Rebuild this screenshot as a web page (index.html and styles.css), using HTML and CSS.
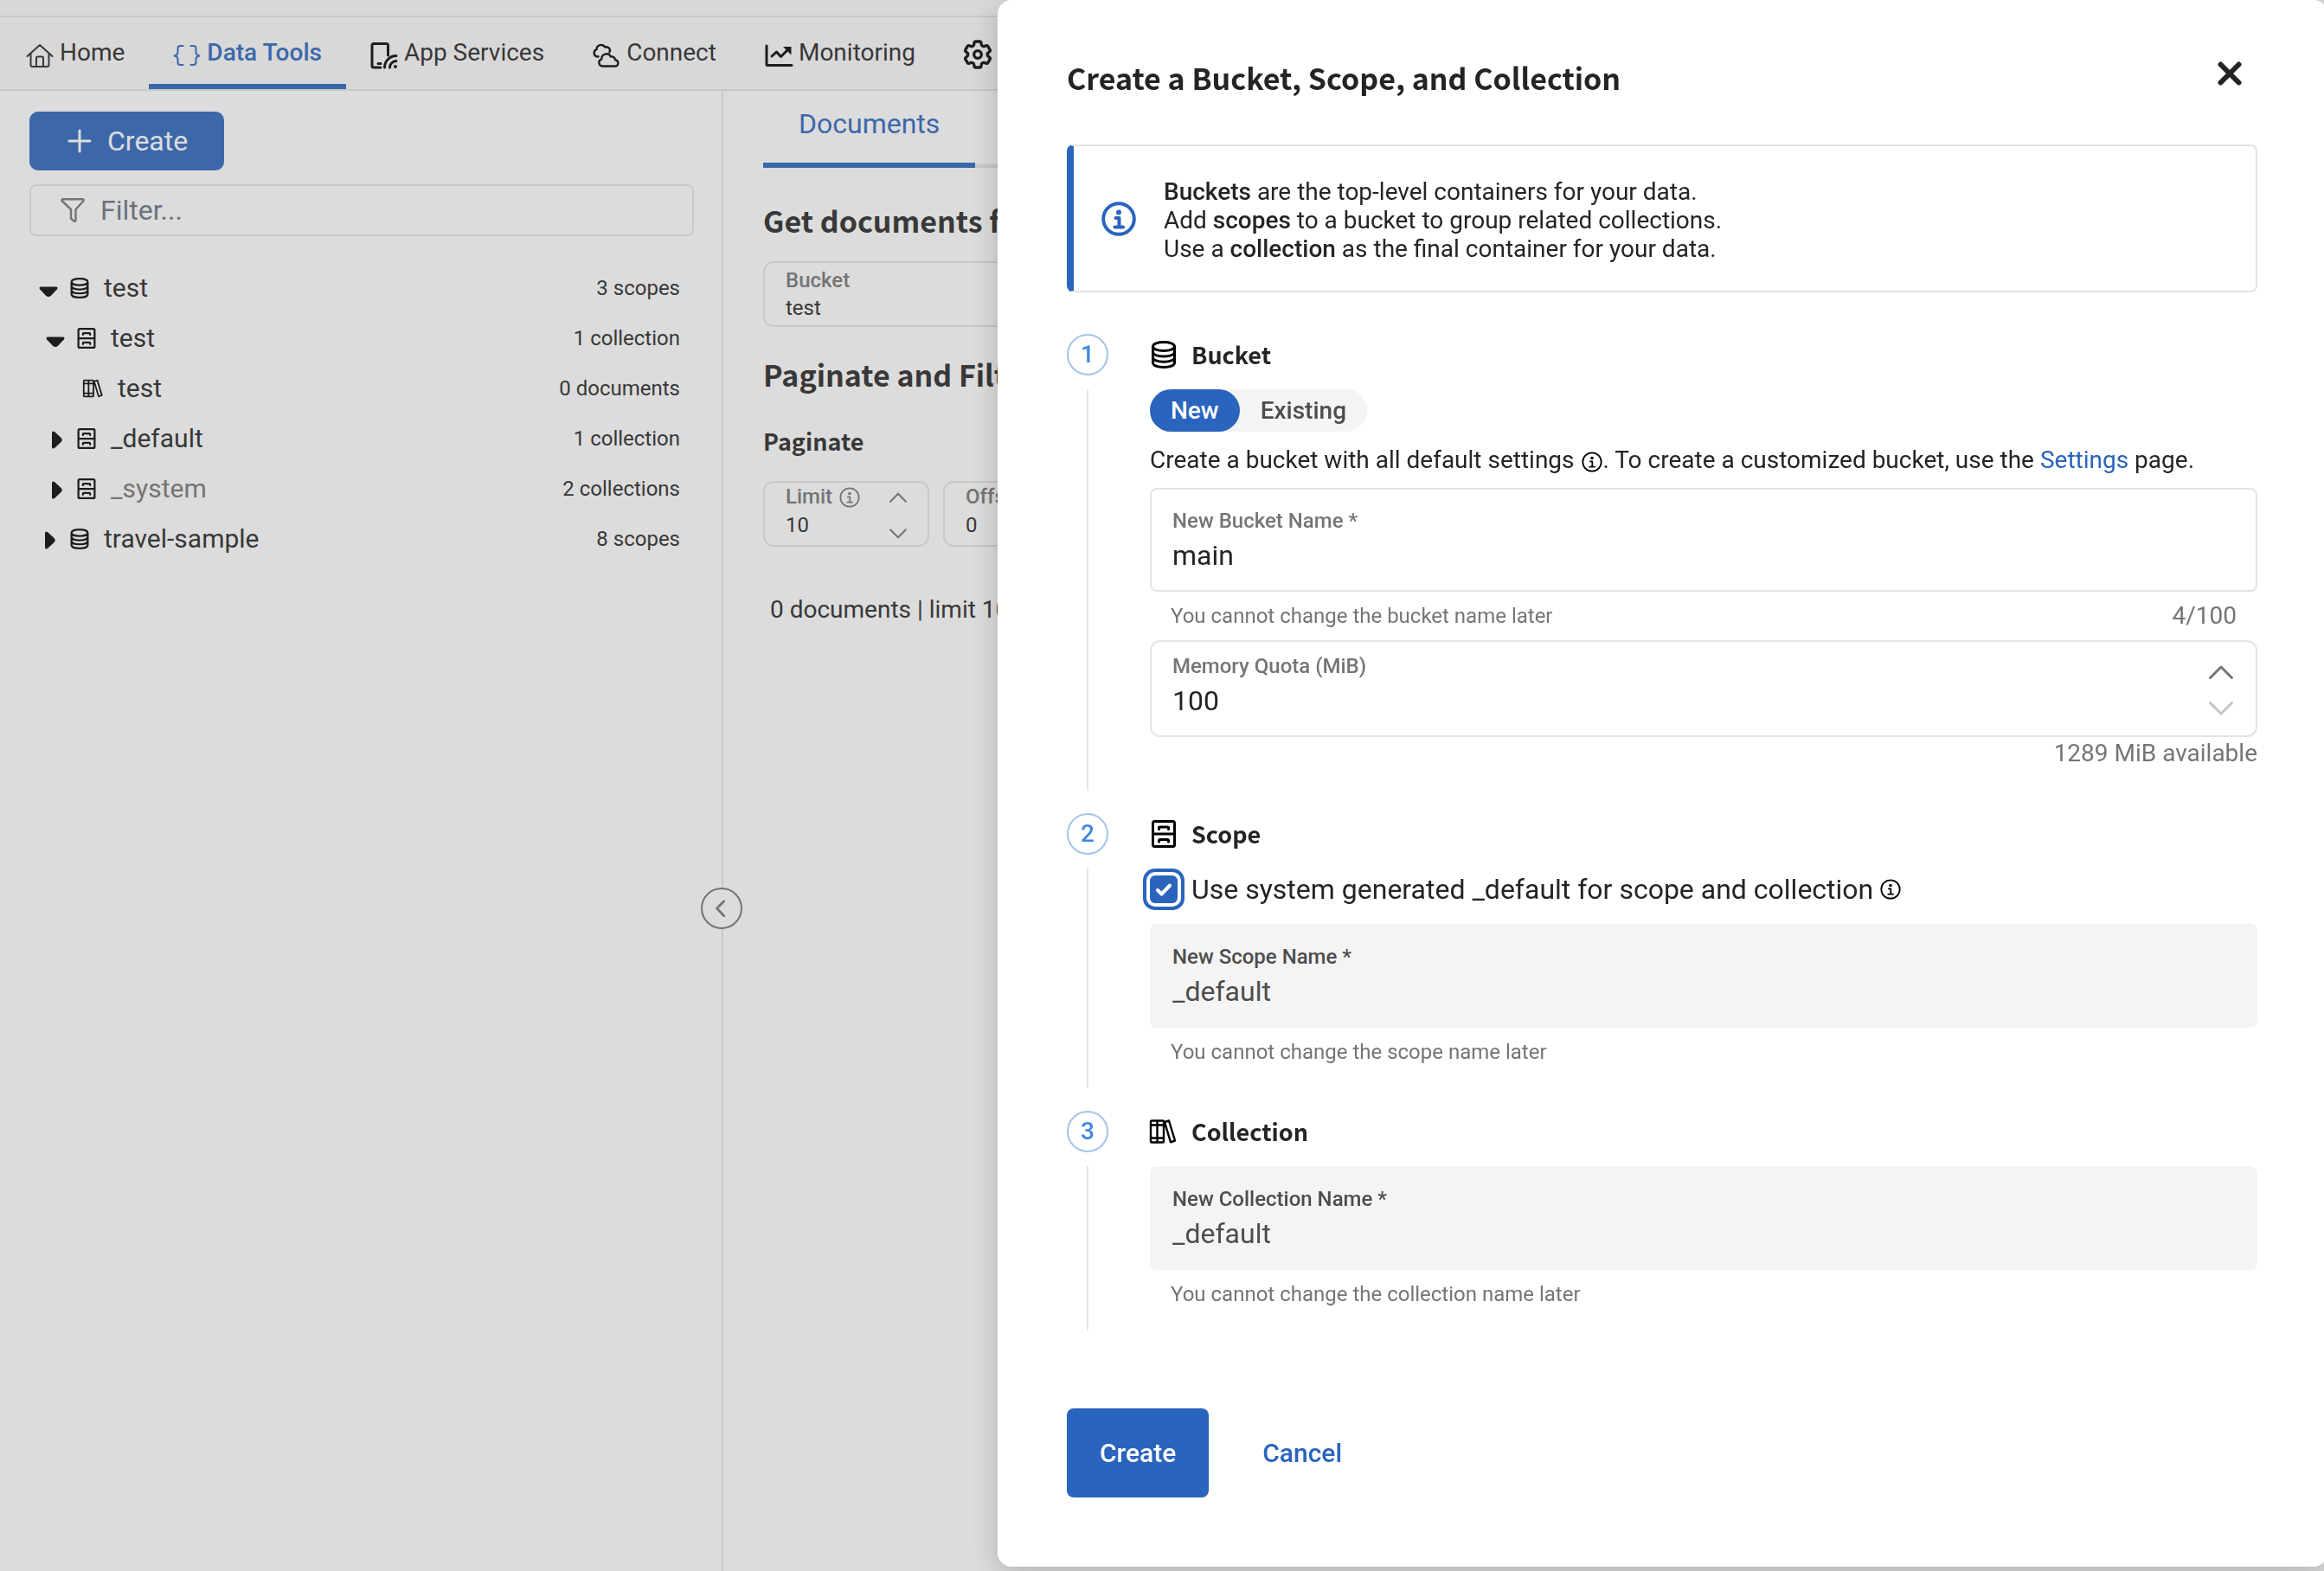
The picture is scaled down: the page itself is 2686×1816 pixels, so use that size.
FILE: index.html
```html
<!DOCTYPE html>
<html lang="en">
<head>
<meta charset="utf-8">
<title>Data Tools</title>
<meta name="viewport" content="width=device-width, initial-scale=1">
<link rel="stylesheet" href="styles.css">
</head>
<body>
<svg class="sprite" aria-hidden="true">
  <symbol id="i-home" viewBox="0 0 32 32"><path d="M1.5 20 16 7l14.5 13M5.500 17v13q0 2 2 2h17q2 0 2-2V17M12 32V22q0-1.500 1.500-1.500h5Q20 20.500 20 22v10"/></symbol>
  <symbol id="i-braces" viewBox="0 0 32 32"><path d="M11.500 8H8.500Q5.500 8 5.500 11v4.500Q5.500 18.500 1.500 19.500 5.500 20.500 5.500 23.500V27q0 3 3 3h3M20.500 8h3q3 0 3 3v4.500q0 3 4 4-4 1-4 4V27q0 3-3 3h-3"/></symbol>
  <symbol id="i-device" viewBox="0 0 32 32"><path d="M12 33H4q-2 0-2-2V7.500q0-2 2-2h14.500q2 0 2 2V19M9 28.500h3M16.500 33a13.500 13.500 0 0 1 13.500-13.500M22.500 33a7.500 7.500 0 0 1 7.500-7.500"/><circle class="dot" cx="29" cy="32" r="2"/></symbol>
  <symbol id="i-clouds" viewBox="0 0 32 32"><path d="M6.500 20.500H5.500a4.300 4.300 0 0 1-1-8.300 5.300 5.300 0 0 1 9.800-2.700 4.200 4.200 0 0 1 5.200 5.800M11.500 31.500a4.200 4.200 0 0 1-1.200-8.200 5.600 5.600 0 0 1 10.600-2.800 4.500 4.500 0 0 1 5.300 3.800 3.700 3.700 0 0 1 .6 7.200z"/></symbol>
  <symbol id="i-chart" viewBox="0 0 32 32"><path d="M2 8v21.500q0 1 1 1h28M8 20l5.500-5 5 5.500L27 12"/><path class="dot" d="M21 9h9.500v9.500z"/></symbol>
  <symbol id="i-gear" viewBox="0 0 24 24"><path d="M9.594 3.940c.09-.542.56-.940 1.110-.940h2.593c.55 0 1.020.398 1.110.940l.213 1.281c.063.374.313.686.645.870.074.040.147.083.220.127.325.196.720.257 1.075.124l1.217-.456a1.125 1.125 0 0 1 1.370.490l1.296 2.247a1.125 1.125 0 0 1-.260 1.431l-1.003.827c-.293.241-.438.613-.430.992a7.723 7.723 0 0 1 0 .255c-.008.378.137.750.430.991l1.004.827c.424.350.534.955.260 1.430l-1.298 2.247a1.125 1.125 0 0 1-1.369.491l-1.217-.456c-.355-.133-.750-.072-1.076.124a6.470 6.470 0 0 1-.220.128c-.331.183-.581.495-.644.869l-.213 1.281c-.090.543-.560.940-1.110.940h-2.594c-.550 0-1.019-.398-1.110-.940l-.213-1.281c-.062-.374-.312-.686-.644-.870a6.520 6.520 0 0 1-.220-.127c-.325-.196-.720-.257-1.076-.124l-1.217.456a1.125 1.125 0 0 1-1.369-.490l-1.297-2.247a1.125 1.125 0 0 1 .260-1.431l1.004-.827c.292-.240.437-.613.430-.991a6.932 6.932 0 0 1 0-.255c.007-.380-.138-.751-.430-.992l-1.004-.827a1.125 1.125 0 0 1-.260-1.430l1.297-2.247a1.125 1.125 0 0 1 1.370-.491l1.216.456c.356.133.751.072 1.076-.124.072-.044.146-.086.220-.128.332-.183.582-.495.644-.869l.214-1.280Z"/><circle cx="12" cy="12" r="2.600"/></symbol>
  <symbol id="i-plus" viewBox="0 0 28 28"><path d="M14 2v24M2 14h24"/></symbol>
  <symbol id="i-filter" viewBox="0 0 28 28"><path d="M2.500 1.200h23q1.500.300 1 2L17.500 13v13q-.500 1.300-2 .700l-3.500-3V13L1.500 3.200q-.500-1.700 1-2z"/></symbol>
  <symbol id="i-down" viewBox="0 0 28 28"><path class="dot" d="M3.500 12.500h17q3 0 1.500 2.800l-7 7.500q-3 2.400-6 0l-7-7.500Q.500 12.500 3.500 12.500z"/></symbol>
  <symbol id="i-right" viewBox="0 0 28 28"><path class="dot" d="M8 7.500q0-3 3-1.500l7.500 7q2.400 2.500 0 5l-7.500 7Q8 26.500 8 23.500z"/></symbol>
  <symbol id="i-bucket" viewBox="0 0 32 32"><path d="M3.500 6.500C3.500 3.500 9 1.500 16 1.500s12.500 2 12.500 5-5.500 5-12.500 5-12.500-2-12.500-5v19c0 3 5.500 5 12.500 5s12.500-2 12.500-5v-19M3.500 13c0 3 5.500 5 12.500 5s12.500-2 12.500-5M3.500 19.300c0 3 5.500 5 12.500 5s12.500-2 12.500-5"/></symbol>
  <symbol id="i-scope" viewBox="0 0 32 32"><path d="M5.500 1.500h21q2 0 2 2v25q0 2-2 2h-21q-2 0-2-2v-25q0-2 2-2zM3.500 16h25M10.500 10.500V9q0-1 1-1h9q1 0 1 1v1.500M10.500 25v-1.500q0-1 1-1h9q1 0 1 1V25"/></symbol>
  <symbol id="i-collection" viewBox="0 0 32 32"><path d="M2 3.500h13q1 0 1 1v23q0 1-1 1H2q-1 0-1-1v-23q0-1 1-1zM8.500 3.500v25M1 8.500h15M1 23.500h15M17 5l5-1.500 7 23-5 1.800z"/></symbol>
  <symbol id="i-info" viewBox="0 0 40 40"><circle cx="20" cy="20" r="17.800"/><circle class="dot" cx="20" cy="12.500" r="3"/><path d="M16.500 19H20.500V29M15.500 29.500H25"/></symbol>
  <symbol id="i-up" viewBox="0 0 28 16"><path d="M1.500 14.500 14 2l12.500 12.500"/></symbol>
  <symbol id="i-dn" viewBox="0 0 28 16"><path d="M1.500 1.500 14 14 26.500 1.500"/></symbol>
  <symbol id="i-collapse" viewBox="0 0 48 48"><path d="M27 15 18 24l9 9.500"/></symbol>
  <symbol id="i-close" viewBox="0 0 28 28"><path d="m3.500 3.500 21 21M24.500 3.500l-21 21"/></symbol>
  <symbol id="i-check" viewBox="0 0 32 32"><path d="M9 17l4.500 4.500L23 11.500"/></symbol>
</svg>

<div class="app">
  <header class="top">
    <nav class="nav" aria-label="Main">
      <a class="nav-item" href="#home"><svg class="icon s32 thin"><use href="#i-home"/></svg>Home</a>
      <a class="nav-item active" href="#data"><svg class="icon s32 thin"><use href="#i-braces"/></svg>Data Tools</a>
      <a class="nav-item" href="#apps"><svg class="icon s32 dark"><use href="#i-device"/></svg>App Services</a>
      <a class="nav-item" href="#connect"><svg class="icon s32 dark medium"><use href="#i-clouds"/></svg>Connect</a>
      <a class="nav-item" href="#monitoring"><svg class="icon s32 dark"><use href="#i-chart"/></svg>Monitoring</a>
      <a class="nav-item" href="#settings" aria-label="Settings"><svg class="icon gear dark"><use href="#i-gear"/></svg></a>
    </nav>
  </header>

  <div class="workspace">
    <aside class="sidebar">
      <button class="add" type="button"><svg class="icon s28"><use href="#i-plus"/></svg>Create</button>
      <label class="filter"><svg class="icon s28 medium"><use href="#i-filter"/></svg><input type="text" placeholder="Filter..." aria-label="Filter"></label>
      <ul class="tree">
        <li class="node"><svg class="icon s28 dark"><use href="#i-down"/></svg><svg class="icon s24 dark"><use href="#i-bucket"/></svg><span class="name">test</span><span class="count">3 scopes</span></li>
        <li class="node l2"><svg class="icon s28 dark"><use href="#i-down"/></svg><svg class="icon s24 dark"><use href="#i-scope"/></svg><span class="name">test</span><span class="count">1 collection</span></li>
        <li class="node l3"><span class="s28"></span><svg class="icon s24 dark medium"><use href="#i-collection"/></svg><span class="name">test</span><span class="count">0 documents</span></li>
        <li class="node l2"><svg class="icon s28 dark"><use href="#i-right"/></svg><svg class="icon s24 dark"><use href="#i-scope"/></svg><span class="name">_default</span><span class="count">1 collection</span></li>
        <li class="node l2"><svg class="icon s28 dark"><use href="#i-right"/></svg><svg class="icon s24 dark"><use href="#i-scope"/></svg><span class="name muted">_system</span><span class="count">2 collections</span></li>
        <li class="node"><svg class="icon s28 dark"><use href="#i-right"/></svg><svg class="icon s24 dark"><use href="#i-bucket"/></svg><span class="name">travel-sample</span><span class="count">8 scopes</span></li>
      </ul>
      <button class="collapse" type="button" aria-label="Collapse sidebar"><svg class="icon"><use href="#i-collapse"/></svg></button>
    </aside>

    <main class="main">
      <div class="tabs"><a class="tab" href="#documents">Documents</a></div>
      <h2 class="h-large first">Get documents from</h2>
      <div class="mini wide"><label for="src">Bucket</label><input id="src" type="text" value="test"></div>
      <h2 class="h-large second">Paginate and Filter</h2>
      <h3 class="h-small">Paginate</h3>
      <div class="mini-row">
        <div class="mini stepper">
          <div class="mini-text"><label for="limit">Limit <svg class="icon s24"><use href="#i-info"/></svg></label><input id="limit" type="number" value="10"></div>
          <div class="spin"><button type="button" aria-label="Increase limit"><svg class="icon"><use href="#i-up"/></svg></button><button type="button" aria-label="Decrease limit"><svg class="icon"><use href="#i-dn"/></svg></button></div>
        </div>
        <div class="mini stepper"><div class="mini-text"><label for="offset">Offset</label><input id="offset" type="number" value="0"></div></div>
      </div>
      <p class="summary">0 documents | limit 10</p>
    </main>
  </div>
</div>

<div class="backdrop"></div>

<section class="drawer" role="dialog" aria-labelledby="drawer-title">
  <header class="drawer-head">
    <h1 class="h-large" id="drawer-title">Create a Bucket, Scope, and Collection</h1>
    <button class="close" type="button" aria-label="Close"><svg class="icon s28"><use href="#i-close"/></svg></button>
  </header>

  <div class="notice">
    <svg class="icon s40"><use href="#i-info"/></svg>
    <p><strong>Buckets</strong> are the top-level containers for your data.<br>Add <strong>scopes</strong> to a bucket to group related collections.<br>Use a <strong>collection</strong> as the final container for your data.</p>
  </div>

  <form class="steps">
    <section class="step">
      <div class="rail"><span class="num">1</span></div>
      <div class="body">
        <h2 class="step-title"><svg class="icon s32"><use href="#i-bucket"/></svg>Bucket</h2>
        <div class="toggle">
          <label class="pill"><input type="radio" name="mode" checked>New</label>
          <label class="pill"><input type="radio" name="mode">Existing</label>
        </div>
        <p class="lead">Create a bucket with all default settings <svg class="icon s24 inline"><use href="#i-info"/></svg>. To create a customized bucket, use the <a href="#settings">Settings</a> page.</p>
        <div class="fieldset">
          <div class="field"><label for="bucket">New Bucket Name *</label><input id="bucket" type="text" value="main"></div>
          <div class="hint"><span>You cannot change the bucket name later</span><span class="counter">4/100</span></div>
          <div class="field number">
            <div class="field-text"><label for="quota">Memory Quota (MiB)</label><input id="quota" type="number" value="100"></div>
            <div class="spin"><button type="button" aria-label="Increase quota"><svg class="icon"><use href="#i-up"/></svg></button><button type="button" aria-label="Decrease quota" disabled><svg class="icon"><use href="#i-dn"/></svg></button></div>
          </div>
          <p class="available">1289 MiB available</p>
        </div>
      </div>
    </section>

    <section class="step">
      <div class="rail"><span class="num">2</span></div>
      <div class="body">
        <h2 class="step-title"><svg class="icon s32"><use href="#i-scope"/></svg>Scope</h2>
        <div class="check">
          <span class="box"><input id="sys" type="checkbox" checked><svg class="icon s32"><use href="#i-check"/></svg></span>
          <label for="sys">Use system generated _default for scope and collection</label>
          <svg class="icon s24"><use href="#i-info"/></svg>
        </div>
        <div class="fieldset">
          <div class="field off"><label for="scope">New Scope Name *</label><input id="scope" type="text" value="_default" disabled></div>
          <div class="hint"><span>You cannot change the scope name later</span></div>
        </div>
      </div>
    </section>

    <section class="step">
      <div class="rail"><span class="num">3</span></div>
      <div class="body">
        <h2 class="step-title"><svg class="icon s32 medium"><use href="#i-collection"/></svg>Collection</h2>
        <div class="fieldset">
          <div class="field off"><label for="coll">New Collection Name *</label><input id="coll" type="text" value="_default" disabled></div>
          <div class="hint"><span>You cannot change the collection name later</span></div>
        </div>
      </div>
    </section>

    <div class="actions">
      <button class="primary" type="submit">Create</button>
      <button class="text" type="button">Cancel</button>
    </div>
  </form>
</section>
</body>
</html>
```
FILE: styles.css
```css
:root {
  --blue: #2a64bd;
  --ink: #242424;
  --muted: #757575;
  --line: #e4e4e4;
  --head: "Noto Sans CJK SC", "Noto Sans", sans-serif;
}

* { box-sizing: border-box; }

body {
  margin: 0;
  background: #fff;
  color: var(--ink);
  font: 28px/34px Roboto, sans-serif;
}

h1, h2, h3, p, ul { margin: 0; padding: 0; }
a { color: inherit; text-decoration: none; }

button, input {
  margin: 0;
  padding: 0;
  border: 0;
  background: none;
  color: inherit;
  font: inherit;
  outline: 0;
}

input[type="number"] { appearance: textfield; -moz-appearance: textfield; }
input::-webkit-inner-spin-button { appearance: none; -webkit-appearance: none; }

.sprite { position: absolute; width: 0; height: 0; }

.icon {
  display: block;
  flex: none;
  overflow: visible;
  fill: none;
  stroke: currentColor;
  stroke-width: 3;
  stroke-linecap: round;
  stroke-linejoin: round;
}
.icon use, symbol { overflow: visible; }
.icon.thin { stroke-width: 2; }
.icon.medium { stroke-width: 2.4; }
.dark { color: #000; }
.dot { fill: currentColor; stroke: none; }
.s24 { width: 24px; height: 24px; }
.s28 { width: 28px; height: 28px; }
.s32 { width: 32px; height: 32px; }
.s40 { width: 40px; height: 40px; stroke-width: 4; }

.h-large {
  font: 700 34px/48px var(--head);
  white-space: nowrap;
}

/* Page behind the drawer */
.app {
  display: flex;
  flex-direction: column;
  min-height: 100vh;
  overflow: hidden;
}

.top {
  padding-top: 18px;
  background: #fafafa;
  border-bottom: 2px solid var(--line);
}

.nav {
  display: flex;
  height: 85px;
  padding-left: 2px;
  border-top: 2px solid var(--line);
}

.nav-item {
  display: flex;
  align-items: center;
  gap: 7px;
  padding: 4px 28px 0;
  border-bottom: 6px solid transparent;
  white-space: nowrap;
}
.nav-item.active {
  border-color: var(--blue);
  color: var(--blue);
  font-weight: 500;
}
.nav-item .gear { width: 40px; height: 40px; margin: 4px -4px 0; stroke-width: 2; }

.workspace { display: flex; flex: 1; }

.sidebar {
  position: relative;
  display: flex;
  flex: none;
  flex-direction: column;
  align-items: stretch;
  width: 836px;
  padding: 24px 32px 0 34px;
  border-right: 2px solid var(--line);
}

.add {
  display: flex;
  align-items: center;
  align-self: flex-start;
  gap: 18px;
  height: 68px;
  padding: 0 42px 0 44px;
  border-radius: 10px;
  background: var(--blue);
  color: #fff;
  font-size: 32px;
}

.filter {
  display: flex;
  align-items: center;
  gap: 18px;
  height: 60px;
  margin-top: 16px;
  padding: 0 34px;
  border: 2px solid var(--line);
  border-radius: 8px;
  color: var(--muted);
  font-size: 32px;
}
.filter input { flex: 1; }
.filter input::placeholder { color: #6b7280; opacity: 1; }

.tree { margin-top: 31px; list-style: none; }

.node {
  display: flex;
  align-items: center;
  height: 58px;
  padding: 0 16px 0 10px;
  font-size: 30px;
}
.node.l2 { padding-left: 18px; }
.node.l3 { padding-left: 26px; }
.node .s24 { margin-left: 8px; }
.name { flex: 1; margin-left: 16px; }
.muted { color: var(--muted); }
.count { font-size: 24px; }

.collapse {
  position: absolute;
  top: 921px;
  right: -24px;
  width: 48px;
  height: 48px;
  border: 2px solid var(--muted);
  border-radius: 50%;
  background: #fff;
  color: var(--muted);
}
.collapse .icon { width: 44px; height: 44px; }

.main { flex: 1; min-width: 0; padding: 0 46px; }

.tabs {
  display: flex;
  height: 89px;
  box-shadow: inset 0 -4px var(--line);
}
.tab {
  padding: 0 41px;
  border-bottom: 6px solid var(--blue);
  color: var(--blue);
  font-size: 32px;
  line-height: 76px;
}

.h-large.first { margin: 37px 0 23px; }
.h-large.second { margin: 31px 0 33px; }
.h-small { margin-bottom: 26px; font: 700 27px/40px var(--head); }

.mini {
  display: flex;
  flex-direction: column;
  gap: 2px;
  height: 76px;
  padding: 5px 24px;
  border: 2px solid var(--line);
  border-radius: 12px;
  font-size: 24px;
  line-height: 30px;
}
.mini input { width: 100%; height: 30px; }
.mini label {
  display: flex;
  align-items: center;
  gap: 8px;
  color: var(--muted);
  font-weight: 500;
}
.mini-row { display: flex; gap: 16px; }
.mini.stepper { flex-direction: row; width: 192px; padding-top: 0; line-height: 33px; }
.mini-text { flex: 1; min-width: 0; }
.mini .spin { gap: 30px; padding-top: 11px; }
.mini .spin .icon { width: 20px; height: 12px; }

.spin { display: flex; flex-direction: column; flex: none; color: var(--muted); }
.spin button { display: block; }
.spin .icon { width: 28px; height: 16px; }
.spin button:disabled { color: #c4c4c4; }

.summary { margin-top: 56px; padding-left: 8px; }

.backdrop {
  position: fixed;
  inset: 0;
  background: rgba(116, 116, 116, 0.25);
}

/* Drawer */
.drawer {
  position: fixed;
  inset: 0 -4px 5px 1153px;
  padding: 60px 81px 0 80px;
  border-radius: 16px;
  background: #fff;
  box-shadow: 0 8px 32px rgba(0, 0, 0, 0.2);
}

.drawer-head {
  display: flex;
  align-items: flex-start;
  justify-content: space-between;
  margin-bottom: 47px;
}
.drawer-head .h-large { line-height: 60px; }
.close {
  display: grid;
  place-items: center;
  width: 48px;
  height: 50px;
  margin-right: 8px;
}
.close .icon { stroke-width: 6; }

.notice {
  display: flex;
  align-items: center;
  gap: 32px;
  padding: 32px;
  border: 2px solid var(--line);
  border-left: 8px solid var(--blue);
  border-radius: 8px;
  line-height: 33px;
}
.notice p { padding-top: 4px; }
.notice .icon { color: var(--blue); }
.notice strong { font-weight: 500; }

.steps { display: flex; flex-direction: column; gap: 26px; margin-top: 48px; }

.step { display: flex; gap: 48px; }

.rail { display: flex; flex-direction: column; align-items: center; gap: 16px; }
.rail::after { content: ""; flex: 1; width: 2px; background: var(--line); }

.num {
  width: 48px;
  height: 48px;
  border: 2px solid #a4c4ea;
  border-radius: 50%;
  color: #4287e0;
  font-weight: 500;
  line-height: 44px;
  text-align: center;
}

.body {
  display: flex;
  flex: 1;
  flex-direction: column;
  gap: 16px;
  padding-bottom: 14px;
}
.step:first-child .body { padding-bottom: 24px; }

.step-title {
  display: flex;
  align-items: center;
  gap: 16px;
  font: 700 27px/48px var(--head);
}
.step-title .icon { color: #000; }

.toggle {
  display: flex;
  align-self: flex-start;
  border-radius: 25px;
  background: #f4f4f4;
}
.pill {
  position: relative;
  padding: 0 24px;
  border-radius: 25px;
  color: #4d4d4d;
  font-weight: 500;
  line-height: 49px;
}
.pill input { position: absolute; opacity: 0; }
.pill:has(:checked) { background: var(--blue); color: #fff; }

.lead { line-height: 33px; }
.lead a { color: var(--blue); }
.inline { display: inline-block; margin-left: 2px; vertical-align: -5px; color: #000; }

.field {
  display: flex;
  flex-direction: column;
  gap: 6px;
  padding: 22px 24px 20px;
  border: 2px solid var(--line);
  border-radius: 8px;
}
.field label {
  display: block;
  color: var(--muted);
  font-size: 24px;
  font-weight: 500;
  line-height: 28px;
}
.field input { width: 100%; height: 40px; font-size: 32px; }

.field.number {
  flex-direction: row;
  align-items: center;
  padding-top: 14px;
  border-radius: 12px;
}
.field-text { display: flex; flex: 1; flex-direction: column; gap: 6px; }
.field.number .spin { gap: 26px; margin-right: 2px; padding-top: 10px; }

.field.off { border-color: #f4f4f4; background: #f4f4f4; }
.field.off label, .field.off input { color: #4d4d4d; }

.hint {
  display: flex;
  justify-content: space-between;
  padding: 0 24px;
  color: var(--muted);
  font-size: 24px;
  line-height: 56px;
}
.counter { font-size: 28px; }
.available { color: var(--muted); line-height: 38px; text-align: right; }

.check {
  display: flex;
  align-items: center;
  height: 48px;
  font-size: 32px;
}
.check label { margin: 0 8px 0 16px; }
.check > .icon { color: #000; }
.box { display: grid; }
.box > * { grid-area: 1 / 1; }
.box input {
  appearance: none;
  width: 32px;
  height: 32px;
  border-radius: 6px;
  background: var(--blue);
  box-shadow: 0 0 0 4px #fff, 0 0 0 8px var(--blue);
}
.box .icon { color: #fff; stroke-width: 4; pointer-events: none; }

.actions { display: flex; gap: 24px; margin-top: 64px; }
.actions button {
  height: 103px;
  padding: 0 38px;
  border-radius: 8px;
  font-size: 30px;
  font-weight: 500;
}
.primary { background: var(--blue); color: #fff; }
.text { color: var(--blue); }
```
